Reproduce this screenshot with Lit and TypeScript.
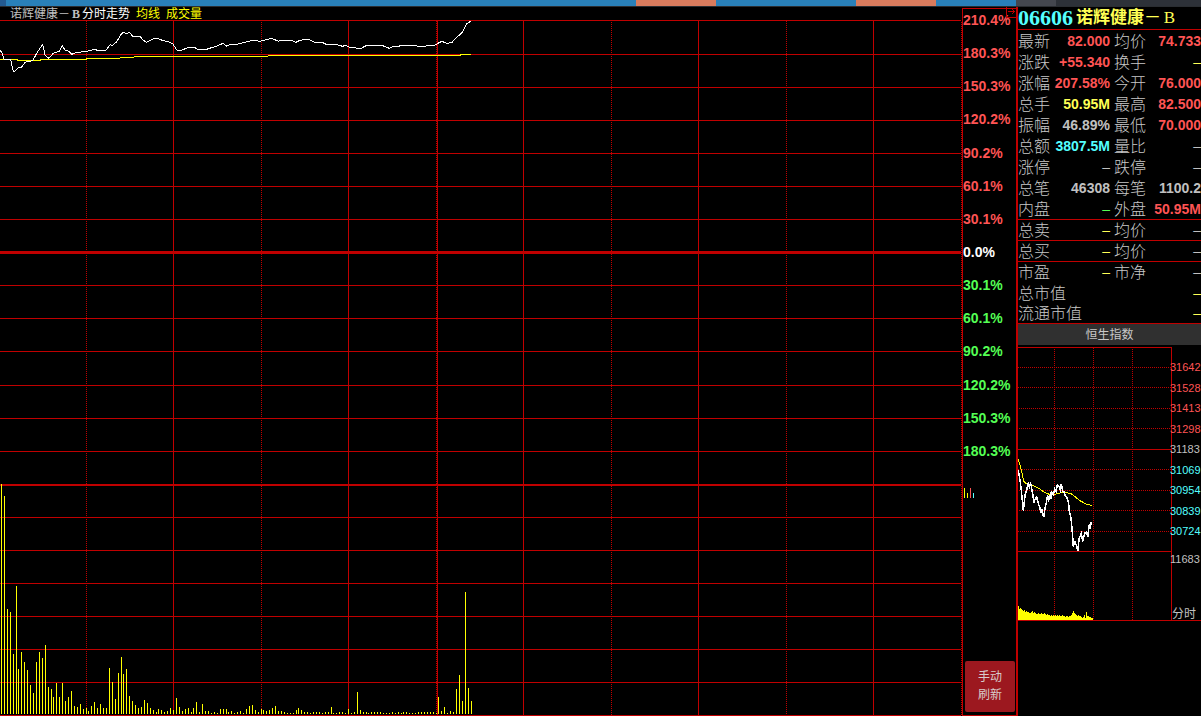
import { LitElement, html, svg, css } from "lit";
import { customElement } from "lit/decorators.js";
import { classMap } from "lit/directives/class-map.js";

type Cell = [label: string, value: string, tone: string];

const QUOTES: [Cell, Cell, boolean][] = [
  [["最新", "82.000", "up"], ["均价", "74.733", "up"], false],
  [["涨跌", "+55.340", "up"], ["换手", "–", "hot"], false],
  [["涨幅", "207.58%", "up"], ["今开", "76.000", "up"], false],
  [["总手", "50.95M", "hot"], ["最高", "82.500", "up"], false],
  [["振幅", "46.89%", "plain"], ["最低", "70.000", "up"], false],
  [["总额", "3807.5M", "cool"], ["量比", "–", "plain"], false],
  [["涨停", "–", "plain"], ["跌停", "–", "plain"], false],
  [["总笔", "46308", "plain"], ["每笔", "1100.2", "plain"], false],
  [["内盘", "–", "down"], ["外盘", "50.95M", "up"], false],
  [["总卖", "–", "hot"], ["均价", "–", "plain"], true],
  [["总买", "–", "hot"], ["均价", "–", "plain"], true],
  [["市盈", "–", "hot"], ["市净", "–", "plain"], true],
];

const TOTALS = ["总市值", "流通市值"];

const SCALE = [
  "210.4%", "180.3%", "150.3%", "120.2%", "90.2%", "60.1%", "30.1%", "0.0%",
  "30.1%", "60.1%", "90.2%", "120.2%", "150.3%", "180.3%",
];

const INDEX_SCALE = [31642, 31528, 31413, 31298, 31183, 31069, 30954, 30839, 30724];

/* Horizontal grid: price rows first, then volume rows. */
const ROWS = [20, 54, 87, 120, 153, 186, 219, 285, 318, 351, 385, 418, 451, 517, 550, 583, 616, 649, 682, 715];
const COLS = [173, 348, 437, 523, 698, 873];
const DOTTED_COLS = [86, 261, 436, 611, 786, 961];

/* Price and average series, in thirds of a chart unit. */
const PRICE = [
  0,150, 5,157, 12,178, 32,180, 40,213, 45,213, 55,204, 65,201, 75,187, 98,182, 110,160, 128,133, 135,165, 146,175,
  160,160, 178,154, 187,137, 195,150, 205,153, 215,163, 230,157, 255,155, 268,152, 283,148, 292,151, 318,151,
  330,134, 338,136, 350,125, 362,104, 370,97, 380,102, 388,97, 398,109, 420,109, 430,121, 440,127, 462,115,
  475,116, 490,122, 505,125, 518,131, 530,150, 545,151, 562,143, 583,142, 592,148, 620,148, 650,138, 670,130,
  680,139, 692,133, 715,132, 757,121, 780,124, 792,121, 815,115, 835,124,
  845,121, 875,121, 888,127, 900,121, 924,118, 945,127, 967,127, 978,133, 1005,133, 1028,139, 1036,136,
  1048,142, 1065,143, 1070,145, 1084,145, 1100,136, 1145,136, 1168,145, 1178,140, 1195,140, 1202,136, 1245,136,
  1255,139, 1276,139, 1282,136, 1304,136, 1312,131, 1325,124, 1340,130, 1355,128, 1370,112, 1385,99, 1392,88,
  1400,72, 1412,63,
];

const AVERAGE = [
  0,178, 52,178, 53,181, 122,181, 123,178, 260,178, 261,175, 360,175, 361,172, 402,172, 403,169, 804,169,
  805,166, 1382,166, 1383,163, 1412,163,
];

const VOLUME = [
  230, 218, 105, 102, 60, 128, 45, 62, 52, 44, 29, 21, 52, 62, 56, 69, 27, 25, 17, 31, 17, 31, 13, 17, 23, 8, 7,
  10, 5, 6, 3, 8, 12, 6, 10, 6, 6, 46, 32, 15, 41, 57, 40, 45, 18, 13, 9, 6, 7, 14, 11, 6, 4, 2, 5,
  4, 2, 3, 6, 4, 16, 7, 3, 5, 6, 2, 6, 12, 2, 10, 3, 3, 1, 2, 1, 5, 5, 5, 2, 3, 1, 2, 3, 1, 5, 8, 9, 4, 2, 5, 4,
  3, 4, 6, 8, 3, 3, 2, 1, 1, 1, 4, 6, 4, 2, 2, 1, 2, 2, 2, 1, 2, 2, 7, 1, 1, 2, 2, 1, 5, 1, 2, 22, 4, 2, 2, 1,
  2, 2, 2, 2, 1, 1, 1, 2, 1, 2, 1, 2, 2, 1, 1, 1, 2, 2, 2, 2, 2, 2, 1, 17, 3, 7, 1, 3, 2, 25, 39, 13, 122, 26, 13,
];

/* Index series, in thirds of a unit from (1010, 480). */
const INDEX_PRICE = [
  25,-30, 28,-12, 30,0, 34,30, 37,60, 40,92, 46,40, 50,32, 54,8, 58,22, 62,10, 68,42, 72,68, 76,56, 80,52, 86,75,
  90,82, 92,100, 95,88, 101,112, 106,80, 109,68, 112,50, 116,60, 118,46, 122,58, 124,36, 130,44, 134,28, 138,35,
  142,16, 147,20, 151,30, 154,12, 158,34, 162,35, 166,48, 172,55, 176,72, 178,95, 182,108, 185,135, 188,170,
  190,200, 195,185, 199,196, 203,214, 207,178, 214,160, 218,185, 224,160, 230,155, 233,172, 238,135, 241,140, 244,127,
];
const INDEX_AVERAGE = [
  25,-62, 30,-45, 42,5, 50,12, 65,14, 88,26, 105,38, 118,43, 135,43, 150,39, 165,38, 182,40, 195,50, 210,62,
  228,72, 245,76,
];
const INDEX_VOLUME = [
  14, 11, 12, 11, 10, 9, 10, 8, 9, 8, 8, 7, 7, 8, 9, 7, 8, 7, 6, 6, 7, 6, 6, 7, 6, 6, 7, 6, 5, 6, 5, 5, 4, 5, 4, 5,
  4, 5, 4, 5, 4, 5, 4, 4, 5, 4, 4, 3, 4, 4, 3, 4, 4, 5, 7, 9, 7, 6, 5, 4, 5, 4, 4, 3, 2, 3, 5, 2, 8, 4, 4, 3, 3, 2, 2,
];

function path(points: number[], dx = 0, dy = 0): string {
  const out: string[] = [];
  for (let i = 0; i < points.length; i += 2) {
    out.push(`${(dx + points[i] / 3).toFixed(1)},${(dy + points[i + 1] / 3).toFixed(1)}`);
  }
  return out.join(" ");
}

/* Dotted lines share one checkerboard lattice: a dot sits where x + y is odd. */
const dottedColumn = (x: number, top: number, bottom: number) =>
  svg`<path class="dots" d="M${x + 0.5} ${(x + top) % 2 ? top : top + 1}V${bottom}"/>`;
const dottedRow = (y: number, left: number, right: number) =>
  svg`<path class="dots" d="M${(y + left) % 2 ? left : left + 1} ${y + 0.5}H${right}"/>`;

const base = css`
  * { box-sizing: border-box; }
  svg { display: block; shape-rendering: crispEdges; }
  .grid { stroke: #c00000; fill: none; }
  .dots { stroke: #c00000; stroke-dasharray: 1 1; fill: none; }
  .price { stroke: #ffffff; fill: none; }
  .average { stroke: #ffff00; fill: none; }
  .volume { fill: #ffff00; }
`;

@customElement("intraday-chart")
export class IntradayChart extends LitElement {
  static styles = [base, css`
    :host { display: flex; flex-direction: column; min-width: 0; }
    .caption {
      display: flex; gap: 6px; margin: 0; padding-left: 10px; height: 13px;
      font-size: 12px; line-height: 15px; font-weight: 400; color: #ffff00; white-space: nowrap;
    }
    .name { color: #c0c0c0; }
    .kind { color: #ffffff; }
    .letter {
      display: inline-block; width: 12px; text-align: center; line-height: 12px;
      font-family: "Liberation Serif", serif; font-weight: 700;
    }
    .plot { flex: 1; width: 100%; height: 0; min-height: 0; }
  `];

  render() {
    return html`
      <h1 class="caption">
        <span><span class="name">诺辉健康－<span class="letter">B</span></span><span class="kind">分时走势</span></span>
        <span>均线</span><span>成交量</span>
      </h1>
      <svg class="plot" viewBox="0 20 962 696" preserveAspectRatio="none" role="img" aria-label="分时走势">
        ${ROWS.map((y) => svg`<path class="grid" d="M0 ${y + 0.5}H961"/>`)}
        ${COLS.map((x) => svg`<path class="grid" d="M${x + 0.5} 20V716"/>`)}
        ${DOTTED_COLS.map((x) => dottedColumn(x, 21, 716))}
        <path class="grid" stroke-width="3" d="M0 252.5H961"/>
        <path class="grid" stroke-width="2" d="M0 485H961"/>
        ${VOLUME.map((h, i) => svg`<rect class="volume" x=${Math.round(1 + i * 2.9165)} y=${714 - h} width="1" height=${h}/>`)}
        <polyline class="average" points=${path(AVERAGE)}/>
        <polyline class="price" points=${path(PRICE)}/>
      </svg>
    `;
  }
}

@customElement("percent-scale")
export class PercentScale extends LitElement {
  static styles = [base, css`
    :host { display: flex; flex-direction: column; position: relative; padding-top: 1px; }
    .frame {
      flex: 1; display: flex; flex-direction: column;
      border: solid #c00000; border-width: 1px 0 1px 1px;
    }
    .labels {
      display: flex; flex-direction: column; justify-content: space-between;
      height: calc(64% - 2px); margin: 0; padding: 3px 0 0; list-style: none;
      font-size: 14px; line-height: 16px; font-weight: 700; color: #ff5454;
    }
    .zero { color: #ffffff; }
    .down { color: #54ff54; }
    .marks { margin: 29px 0 0 1px; }
    .refresh {
      margin: auto 1px 3px 2px; height: 51px; padding: 0 0 2px; border: 0; border-radius: 2px;
      background: #9c181f; color: #d8cccc; font: inherit; font-size: 12px; line-height: 18px;
    }
    .expand {
      position: absolute; top: 0; right: 0; width: 10px; height: 11px; padding: 0;
      background: none; border: solid #c00000; border-width: 0 0 1px 1px;
    }
  `];

  render() {
    return html`
      <div class="frame">
        <ul class="labels">
          ${SCALE.map((s, i) => html`<li class=${classMap({ zero: i === 7, down: i > 7 })}>${s}</li>`)}
        </ul>
        <svg class="marks" width="11" height="10" viewBox="0 0 11 10" aria-hidden="true">
          <rect x="0" y="0" width="1" height="10" fill="#ffff00"/>
          <rect x="3" y="5" width="1" height="5" fill="#ffff00"/>
          <rect x="6" y="0" width="1" height="10" fill="#ff5454"/>
          <rect x="9" y="5" width="1" height="5" fill="#54ffff"/>
        </svg>
        <button class="refresh" type="button">手动<br />刷新</button>
      </div>
      <button class="expand" type="button" aria-label="展开">
        <svg width="9" height="10" viewBox="0 0 9 10"><path d="M1 4.5H8M5 2.5H6M6 3.5H7M6 5.5H7M5 6.5H6" stroke="#c00000"/></svg>
      </button>
    `;
  }
}

@customElement("quote-panel")
export class QuotePanel extends LitElement {
  static styles = [base, css`
    :host { display: block; border-left: 2px solid #c00000; }
    .head {
      display: flex; align-items: center; gap: 3px; height: 23px; margin: 0;
      border-bottom: 1px solid #c00000; font-size: 17px; line-height: 22px; color: #ffff54; white-space: nowrap;
    }
    .code { font-family: "Liberation Serif", serif; font-size: 22px; color: #54ffff; }
    .thin { font-weight: 400; }
    .letter {
      display: inline-block; width: 17px; text-align: center; line-height: 16px;
      font-family: "Liberation Serif", serif;
    }
    .quotes { width: 100%; table-layout: fixed; border-collapse: separate; border-spacing: 0; }
    .c-label { width: 32px; }
    .c-value { width: 60px; }
    .c-label2 { width: 36px; }
    th, td { height: 21px; padding: 0; line-height: 20px; white-space: nowrap; }
    th { padding-top: 2px; font-size: 16px; line-height: 18px; font-weight: 300; color: #c8c8c8; text-align: left; }
    .second { padding-left: 4px; }
    td { font-size: 14px; font-weight: 700; text-align: right; color: #c0c0c0; }
    .ruled > * { border-top: 1px solid #c00000; }
    .last > * { border-bottom: 1px solid #c00000; }
    .up { color: #ff5454; }
    .down { color: #54ff54; }
    .hot { color: #ffff54; }
    .cool { color: #54ffff; }
    .dash { font-weight: 400; }
    .index-name {
      margin: 0; height: 21px; background: #303030; color: #c8c8c8;
      font-size: 12px; line-height: 23px; font-weight: 400; text-align: center;
    }
    .index { display: flex; height: 276px; border-bottom: 1px solid #c00000; }
    .index-plot { flex: 1; min-width: 0; height: 275px; }
    .axis {
      width: 31px; margin-left: -2px; padding-top: 16px; display: flex; flex-direction: column;
      font-size: 11px; line-height: 12px; color: #c0c0c0;
    }
    .levels {
      display: flex; flex-direction: column; justify-content: space-between;
      height: 176px; margin: 0 0 16px; padding: 0; list-style: none;
    }
    .period { margin-top: auto; padding-left: 2px; font-size: 12px; white-space: nowrap; }
  `];

  private value(cell: Cell) {
    return html`<td class=${classMap({ [cell[2]]: true, dash: cell[1] === "–" })}>${cell[1]}</td>`;
  }

  render() {
    return html`
      <h2 class="head">
        <span class="code">06606</span><span>诺辉健康<span class="thin">－<span class="letter">B</span></span></span>
      </h2>
      <table class="quotes">
        <colgroup><col class="c-label" /><col class="c-value" /><col class="c-label2" /><col /></colgroup>
        <tbody>
          ${QUOTES.map(([a, b, ruled]) => html`
            <tr class=${classMap({ ruled })}>
              <th scope="row">${a[0]}</th>${this.value(a)}
              <th scope="row" class="second">${b[0]}</th>${this.value(b)}
            </tr>`)}
          ${TOTALS.map((t, i) => html`
            <tr class=${classMap({ last: i === TOTALS.length - 1 })}>
              <th scope="row" colspan="2">${t}</th><td colspan="2" class="hot dash">–</td>
            </tr>`)}
        </tbody>
      </table>
      <h3 class="index-name">恒生指数</h3>
      <div class="index">
        <svg class="index-plot" viewBox="1018 345 154 275" preserveAspectRatio="none" role="img" aria-label="恒生指数">
          ${[347, 449, 551].map((y) => svg`<path class="grid" d="M1018 ${y + 0.5}H1172"/>`)}
          <path class="grid" d="M1171.5 347V620"/>
          ${[367, 387, 408, 428, 469, 490, 510, 531].map((y) => dottedRow(y, 1018, 1171))}
          ${[1054, 1093, 1132].map((x) => dottedColumn(x, 348, 620))}
          ${INDEX_VOLUME.map((h, i) => svg`<rect class="volume" x=${1018 + i} y=${620 - h} width="1" height=${h}/>`)}
          <polyline class="average" points=${path(INDEX_AVERAGE, 1010, 480)}/>
          <polyline class="price" stroke-width="1.5" points=${path(INDEX_PRICE, 1010, 480)}/>
        </svg>
        <div class="axis">
          <ul class="levels">
            ${INDEX_SCALE.map((n) => html`<li class=${classMap({ up: n > 31183, cool: n < 31183 })}>${n}</li>`)}
          </ul>
          <span>11683</span>
          <span class="period">分时</span>
        </div>
      </div>
    `;
  }
}

@customElement("app-root")
export class AppRoot extends LitElement {
  static styles = [base, css`
    :host {
      display: flex; flex-direction: column; height: 100vh; min-height: 660px; overflow: hidden;
      background: #000000; font-family: "Liberation Sans", "Noto Sans CJK SC", sans-serif;
    }
    .strip { display: flex; height: 7px; background: #2980b9; border-bottom: 1px solid #2a2d31; }
    .edge { width: 6px; background: #235a90; }
    .tab { width: 80px; background: #d87b5d; }
    .lead { flex: 1; }
    .gap { width: 140px; }
    .tail { width: 80px; }
    .grip { width: 40px; background: #44474f; }
    .rest { width: 145px; background: #2d3138; }
    .desk { flex: 1; min-height: 0; display: grid; grid-template-columns: 1fr 54px 185px; }
  `];

  render() {
    return html`
      <div class="strip">
        <i class="edge"></i><i class="lead"></i><i class="tab"></i><i class="gap"></i><i class="tab"></i>
        <i class="tail"></i><i class="grip"></i><i class="rest"></i>
      </div>
      <main class="desk">
        <intraday-chart></intraday-chart>
        <percent-scale></percent-scale>
        <quote-panel></quote-panel>
      </main>
    `;
  }
}
